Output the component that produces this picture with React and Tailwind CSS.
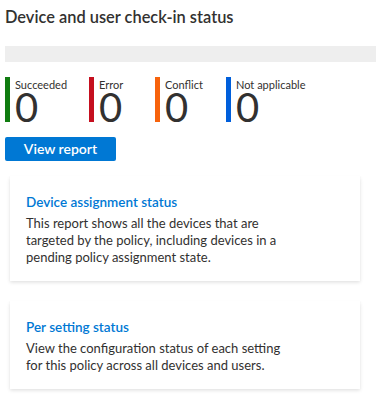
import React from 'react';

const stats = [
  { label: 'Succeeded', value: 0, bar: 'bg-[#107c10]', w: 'w-[84px]' },
  { label: 'Error', value: 0, bar: 'bg-[#c50f1f]', w: 'w-[66px]' },
  { label: 'Conflict', value: 0, bar: 'bg-[#f7630c]', w: 'w-[71px]' },
  { label: 'Not applicable', value: 0, bar: 'bg-[#005fdb]', w: 'w-[100px]' },
];

const cards = [
  {
    title: 'Device assignment status',
    body: 'This report shows all the devices that are targeted by the policy, including devices in a pending policy assignment state.',
  },
  {
    title: 'Per setting status',
    body: 'View the configuration status of each setting for this policy across all devices and users.',
  },
];

export default function App() {
  return (
    <div className="w-[376px] h-[406px] overflow-hidden bg-white text-[#323130] font-['Segoe_UI','Lato',sans-serif]">
      <div className="pl-[5px] pt-[6px]">
        {/* Header */}
        <h1 className="text-[16.4px] leading-[22px] font-semibold">Device and user check-in status</h1>

        {/* Loading / progress strip */}
        <div className="mt-[18px] h-[16px] bg-[#eeeeee]" />

        {/* Status counters */}
        <div className="mt-[15px] flex">
          {stats.map((s) => (
            <div key={s.label} className={`flex ${s.w}`}>
              <div className={`w-[5px] h-[45px] ${s.bar}`} />
              <div className="pl-[5px] flex flex-col">
                <span className="text-[11px] leading-[14px] mt-[1px]">{s.label}</span>
                <span className="text-[40px] leading-[30px] font-normal">{s.value}</span>
              </div>
            </div>
          ))}
        </div>

        <button className="mt-[15px] w-[111px] h-[24px] rounded-[2px] bg-[#0078d4] text-white text-[14px] font-semibold leading-none">
          View report
        </button>

        {/* Report cards */}
        <div className="mt-[15px] ml-[5px] w-[350px] flex flex-col gap-[20px]">
          {cards.map((c) => (
            <div key={c.title} className="bg-white shadow-[0_1.6px_3.6px_rgba(0,0,0,0.13),0_0.3px_0.9px_rgba(0,0,0,0.11)] px-[16px] pt-[16px] pb-[15px]">
              <div className="text-[13.5px] leading-[20px] font-semibold text-[#0078d4]">{c.title}</div>
              <p className="mt-[3px] max-w-[262px] text-[13px] leading-[17px]">{c.body}</p>
            </div>
          ))}
        </div>
      </div>
    </div>
  );
}
